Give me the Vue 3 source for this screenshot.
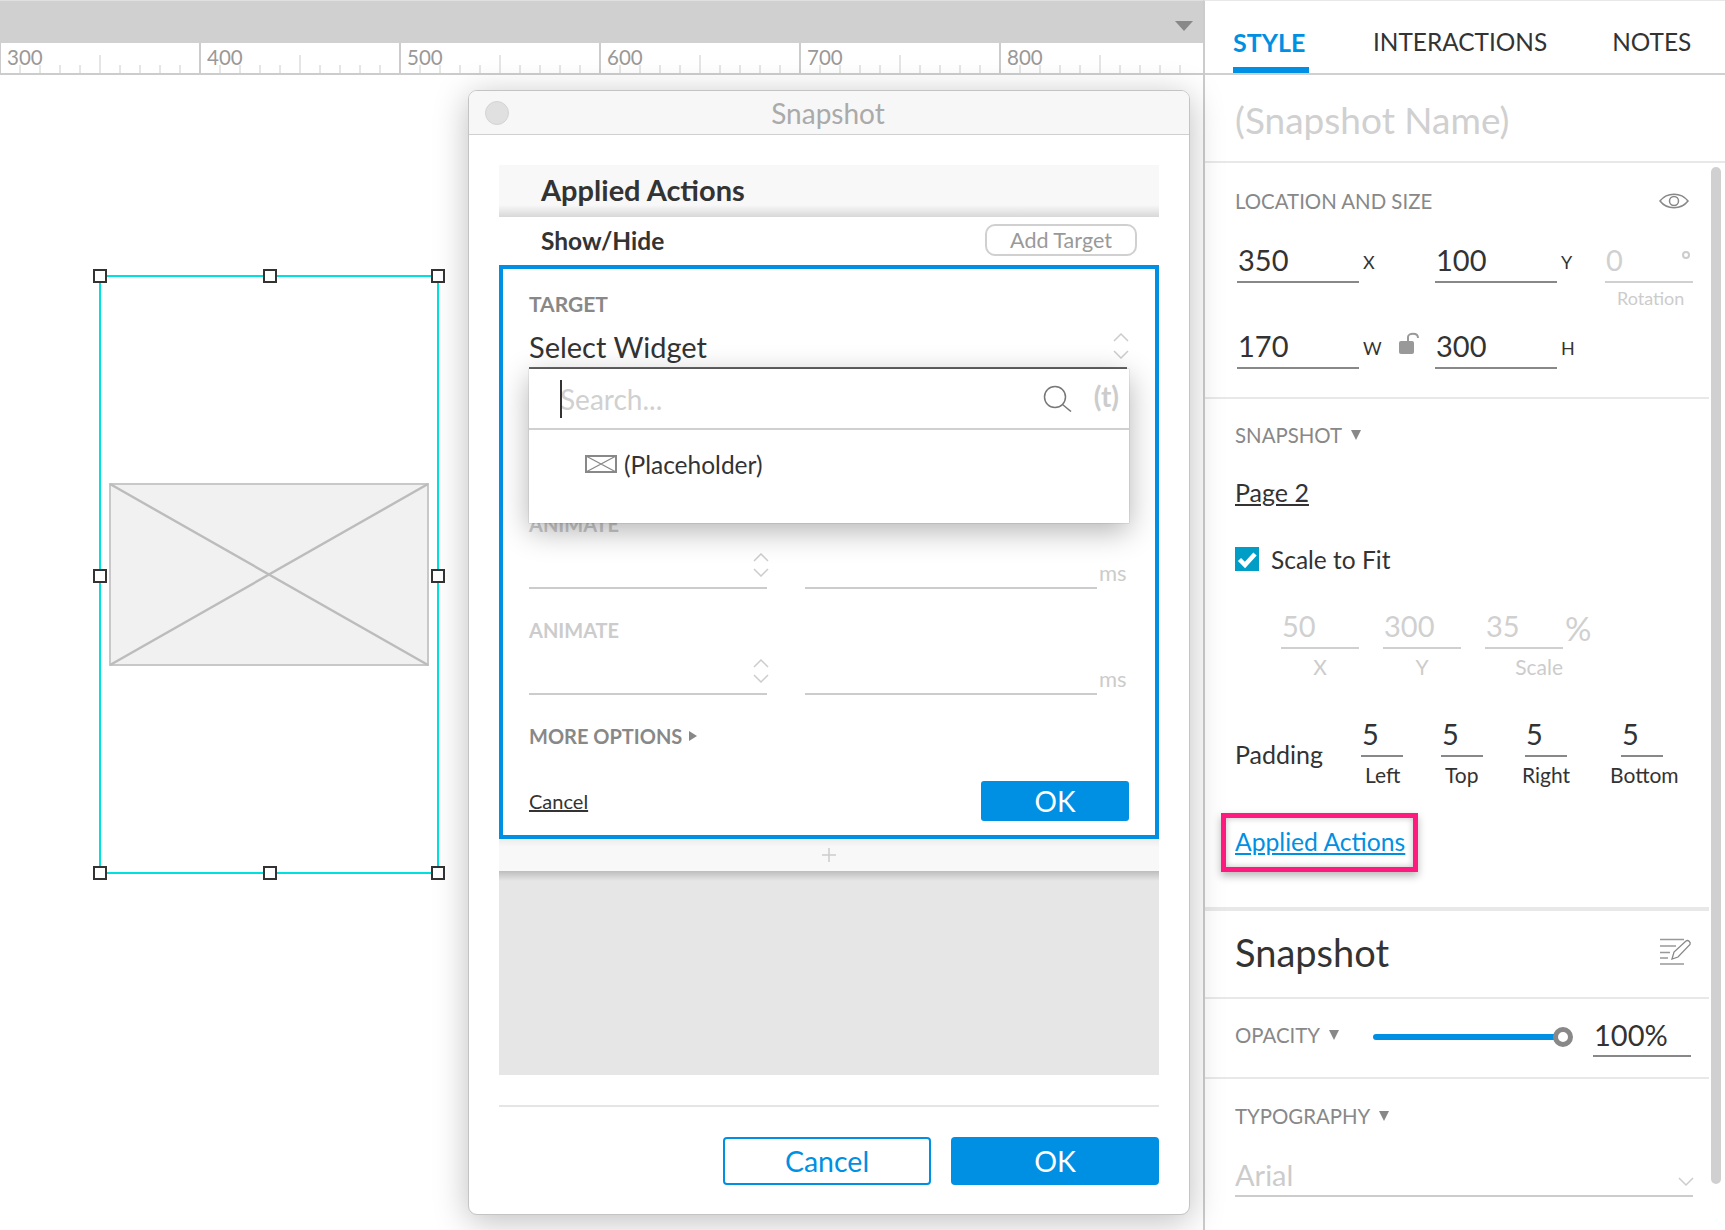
<script setup>
const segments = [300, 400, 500, 600, 700, 800]
const ticks = [20, 40, 60, 80, 100, 120, 140, 160, 180]
const handles = []
for (const y of [0, 50.2, 100]) {
  for (const x of [0, 50.3, 100]) {
    if (x === 50.3 && y === 50.2) continue
    handles.push({ x, y })
  }
}
const paddings = [
  { label: 'Left', cls: 'p-left' },
  { label: 'Top', cls: 'p-top' },
  { label: 'Right', cls: 'p-right' },
  { label: 'Bottom', cls: 'p-bottom' }
]
</script>

<template>
  <div class="app">
    <div class="workspace">
      <div class="toolbar"><span class="toolbar-caret"></span></div>
      <div class="ruler">
        <div v-for="s in segments" :key="s" class="segment">
          <span class="ruler-label">{{ s }}</span>
          <svg class="ruler-ticks" width="200" height="30" viewBox="0 0 200 30">
            <line
              v-for="t in ticks"
              :key="t"
              :x1="t"
              :x2="t"
              :y1="t === 100 ? 12 : 22"
              y2="30"
              stroke="#ccc"
              stroke-width="1"
            />
          </svg>
        </div>
      </div>
      <div class="canvas">
        <div class="selection">
          <svg class="placeholder" width="320" height="183" viewBox="0 0 320 183">
            <rect x="1" y="1" width="318" height="181" fill="#f1f1f1" stroke="#c8c8c8" stroke-width="2" />
            <path d="M1 1 L319 182 M319 1 L1 182" stroke="#bcbcbc" stroke-width="2.4" fill="none" />
          </svg>
          <div class="handles">
            <span
              v-for="(h, i) in handles"
              :key="i"
              class="handle"
              :style="{ left: h.x + '%', top: h.y + '%' }"
            ></span>
          </div>
        </div>
      </div>
    </div>

    <aside class="panel">
      <nav class="tabs">
        <span class="tab tab-active">STYLE</span>
        <span class="tab">INTERACTIONS</span>
        <span class="tab tab-notes">NOTES</span>
      </nav>
      <div class="name-row">(Snapshot Name)</div>
      <div class="panel-body">
        <div class="panel-content">
          <section class="sec sec-location">
            <div class="sec-title">
              <span class="caps">LOCATION AND SIZE</span>
              <svg class="eye" width="30" height="20" viewBox="0 0 30 20">
                <path d="M1 10 C8 1 22 1 29 10 C22 19 8 19 1 10 Z" fill="none" stroke="#888" stroke-width="1.5" />
                <circle cx="15" cy="10" r="4.5" fill="none" stroke="#888" stroke-width="1.5" />
              </svg>
            </div>
            <div class="loc-row loc-row-first">
              <div class="field wide">350</div>
              <span class="tag tag-a">X</span>
              <div class="field wide">100</div>
              <span class="tag tag-b">Y</span>
              <div class="rot">
                <div class="field rot-field"><span>0</span><span class="degree"></span></div>
                <div class="rot-label">Rotation</div>
              </div>
            </div>
            <div class="loc-row">
              <div class="field wide">170</div>
              <span class="tag tag-a">
                <span>W</span>
                <svg class="lock" width="21" height="23" viewBox="0 0 21 23">
                  <rect x="0" y="9" width="15" height="13" rx="2" fill="#999" />
                  <path d="M9 9 V5 C9 1 19 0 19 6" fill="none" stroke="#999" stroke-width="2" />
                </svg>
              </span>
              <div class="field wide">300</div>
              <span class="tag tag-b">H</span>
            </div>
          </section>

          <section class="sec sec-snapshot">
            <div class="caps caret-label">SNAPSHOT <i class="tri-down"></i></div>
            <a class="page-link">Page 2</a>
            <label class="check-row">
              <span class="checkbox">
                <svg width="24" height="24" viewBox="0 0 24 24">
                  <path d="M4.5 12.5 L10 18 L20 7" fill="none" stroke="#fff" stroke-width="4.5" />
                </svg>
              </span>
              <span>Scale to Fit</span>
            </label>
            <div class="fit-row">
              <div class="fit-col">
                <div class="field off">50</div>
                <div class="fit-label">X</div>
              </div>
              <div class="fit-col">
                <div class="field off">300</div>
                <div class="fit-label">Y</div>
              </div>
              <div class="fit-col">
                <div class="field off">35</div>
                <div class="fit-label scale">Scale</div>
              </div>
              <span class="percent">%</span>
            </div>
            <div class="padding-row">
              <span class="padding-title">Padding</span>
              <div v-for="p in paddings" :key="p.label" class="pad-col" :class="p.cls">
                <div class="field pad-field">5</div>
                <div class="pad-label">{{ p.label }}</div>
              </div>
            </div>
            <div class="highlight"><a class="applied-link">Applied Actions</a></div>
          </section>

          <section class="sec-heading">
            <h2>Snapshot</h2>
            <svg class="edit-icon" width="32" height="28" viewBox="0 0 32 28">
              <path d="M0 1.5 H24 M0 8 H16 M0 14.5 H10 M0 20 H8 M0 26 H24" stroke="#999" stroke-width="1.5" fill="none" />
              <path d="M12 21 L14 14 L26 3 C28 1.5 31 4 30 6.5 L18 19 Z" fill="#fff" stroke="#888" stroke-width="1.3" />
            </svg>
          </section>

          <section class="sec-opacity">
            <div class="caps caret-label opacity-label">OPACITY <i class="tri-down"></i></div>
            <div class="slider"><span class="knob"></span></div>
            <div class="field opacity-field">100%</div>
          </section>

          <section class="sec-type">
            <div class="caps caret-label">TYPOGRAPHY <i class="tri-down"></i></div>
            <div class="font-select">
              <span>Arial</span>
              <svg width="16" height="10" viewBox="0 0 16 10">
                <path d="M1 1 L8 8 L15 1" fill="none" stroke="#ccc" stroke-width="1.5" />
              </svg>
            </div>
          </section>
        </div>
        <div class="scrollbar"></div>
      </div>
    </aside>

    <div class="dialog">
      <header class="dialog-title">
        <span class="dot"></span>
        <span>Snapshot</span>
      </header>
      <div class="dialog-body">
        <div class="actions-head">Applied Actions</div>
        <div class="show-row">
          <span class="show-name">Show/Hide</span>
          <button class="add-target">Add Target</button>
        </div>
        <div class="editor">
          <div class="ed-label target">TARGET</div>
          <div class="select-row">
            <span>Select Widget</span>
            <svg class="updown" width="16" height="26" viewBox="0 0 16 26">
              <path d="M1 8 L8 1 L15 8 M1 18 L8 25 L15 18" fill="none" stroke="#ccc" stroke-width="1.5" />
            </svg>
          </div>

          <div class="ed-label muted first-animate">ANIMATE</div>
          <div class="timing">
            <div class="t-left">
              <svg class="updown-small" width="16" height="24" viewBox="0 0 16 24">
                <path d="M1 8 L8 1 L15 8 M1 16 L8 23 L15 16" fill="none" stroke="#ccc" stroke-width="1.5" />
              </svg>
            </div>
            <div class="t-right"></div>
            <span class="ms">ms</span>
          </div>
          <div class="ed-label muted next-animate">ANIMATE</div>
          <div class="timing">
            <div class="t-left">
              <svg class="updown-small" width="16" height="24" viewBox="0 0 16 24">
                <path d="M1 8 L8 1 L15 8 M1 16 L8 23 L15 16" fill="none" stroke="#ccc" stroke-width="1.5" />
              </svg>
            </div>
            <div class="t-right"></div>
            <span class="ms">ms</span>
          </div>
          <div class="ed-label more">MORE OPTIONS <i class="tri-right"></i></div>
          <div class="ed-footer">
            <a class="ed-cancel">Cancel</a>
            <button class="ed-ok">OK</button>
          </div>

          <div class="dropdown">
            <div class="search-row">
              <span class="search-text">Search...</span>
              <svg class="search-icon" width="29" height="27" viewBox="0 0 29 27">
                <circle cx="12" cy="12" r="10.5" fill="none" stroke="#777" stroke-width="1.5" />
                <path d="M19.5 19.5 L28 26.5" stroke="#777" stroke-width="1.5" />
              </svg>
              <span class="search-t">(t)</span>
            </div>
            <div class="result-row">
              <svg width="32" height="18" viewBox="0 0 32 18">
                <rect x="1" y="1" width="30" height="16" fill="#fff" stroke="#888" stroke-width="2" />
                <path d="M1 1 L31 17 M31 1 L1 17" stroke="#888" stroke-width="1.3" fill="none" />
              </svg>
              <span>(Placeholder)</span>
            </div>
          </div>
        </div>
        <div class="add-row">
          <svg width="14" height="14" viewBox="0 0 14 14">
            <path d="M7 0 V14 M0 7 H14" stroke="#ccc" stroke-width="1.5" />
          </svg>
        </div>
        <div class="gray-area"></div>
        <div class="dialog-rule"></div>
        <div class="dialog-foot">
          <button class="btn-cancel">Cancel</button>
          <button class="btn-ok">OK</button>
        </div>
      </div>
    </div>
  </div>
</template>

<style>
html, body { margin: 0; background: #fff; }
</style>

<style scoped>
.app {
  position: relative;
  display: flex;
  width: 1725px;
  height: 1230px;
  overflow: hidden;
  background: #fff;
  font-family: Lato, "Open Sans", sans-serif;
  color: #333;
}
button { font-family: inherit; cursor: pointer; padding: 0; }

/* Workspace */
.workspace { flex: 0 0 1203px; display: flex; flex-direction: column; }
.toolbar {
  position: relative;
  height: 43px;
  box-sizing: border-box;
  background: #d0d0d0;
  border-top: 1px solid #e0e0e0;
}
.toolbar-caret {
  position: absolute;
  right: 10px;
  top: 20px;
  border-left: 9px solid transparent;
  border-right: 9px solid transparent;
  border-top: 10px solid #888;
}
.ruler {
  display: flex;
  height: 32px;
  box-sizing: border-box;
  margin-left: -1px;
  border-bottom: 2px solid #ccc;
  overflow: hidden;
}
.segment {
  position: relative;
  flex: 0 0 200px;
  box-sizing: border-box;
  border-left: 2px solid #ccc;
}
.ruler-label {
  position: absolute;
  left: 6px;
  top: 2px;
  font-size: 20.5px;
  line-height: 24px;
  color: #999;
}
.ruler-ticks { position: absolute; left: -1px; top: 0; display: block; }
.canvas { position: relative; flex: 1; }
.selection {
  position: absolute;
  left: 99px;
  top: 200px;
  width: 340px;
  height: 599px;
  box-sizing: border-box;
  border: 2px solid #00e0e0;
  display: flex;
  align-items: center;
  justify-content: center;
}
.placeholder { filter: blur(0.5px); }
.handles { position: absolute; inset: -1px; }
.handle {
  position: absolute;
  width: 14px;
  height: 14px;
  box-sizing: border-box;
  border: 2px solid #333;
  background: #fff;
  transform: translate(-50%, -50%);
}

/* Panel */
.panel {
  flex: 1;
  display: flex;
  flex-direction: column;
  border-left: 2px solid #ccc;
  border-top: 1px solid #e8e8e8;
  box-sizing: border-box;
  min-width: 0;
}
.tabs {
  display: flex;
  gap: 64px;
  height: 74px;
  box-sizing: border-box;
  padding-left: 28px;
  border-bottom: 2px solid #d0d0d0;
}
.tab {
  box-sizing: border-box;
  height: 72px;
  padding-top: 24px;
  font-size: 24.4px;
  line-height: 34px;
  color: #333;
}
.tab-active {
  width: 76px;
  padding-left: 0;
  color: #0090e3;
  font-size: 25px;
  font-weight: 700;
  border-bottom: 6px solid #0090e3;
}
.tab-notes { margin-left: 1px; }
.name-row {
  height: 88px;
  box-sizing: border-box;
  padding: 24px 0 0 30px;
  border-bottom: 2px solid #e8e8e8;
  font-size: 37px;
  line-height: 42px;
  color: #d0d0d0;
}
.panel-body { display: flex; flex: 1; min-height: 0; }
.panel-content { flex: 0 0 504px; }
.scrollbar {
  flex: 0 0 10px;
  height: 1017px;
  margin: 4px 0 0 2px;
  border-radius: 5px;
  background: #d0d0d0;
}
.caps { font-size: 20.4px; line-height: 24px; color: #888; }
.sec { padding-left: 30px; padding-right: 16px; }
.sec-location { padding-top: 26px; padding-bottom: 28px; border-bottom: 2px solid #e8e8e8; }
.sec-title { display: flex; justify-content: space-between; align-items: center; height: 24px; }
.eye { margin-right: 4px; }
.loc-row { display: flex; align-items: flex-start; padding-left: 2px; }
.loc-row-first { margin-top: 26px; height: 86px; }
.field {
  height: 44px;
  box-sizing: border-box;
  border-bottom: 2px solid #888;
  font-size: 29px;
  line-height: 42px;
  color: #333;
}
.wide { width: 122px; padding-left: 1px; }
.tag {
  display: flex;
  align-items: flex-start;
  height: 44px;
  box-sizing: border-box;
  padding-left: 4px;
  font-size: 18px;
  line-height: 46px;
}
.tag-a { width: 76px; }
.tag-b { width: 48px; }
.lock { margin: 7px 0 0 17px; }
.rot { width: 88px; }
.rot-field {
  position: relative;
  padding-left: 1px;
  color: #d0d0d0;
  border-bottom-color: #d0d0d0;
}
.degree {
  position: absolute;
  right: 3px;
  top: 12px;
  width: 8px;
  height: 8px;
  box-sizing: border-box;
  border: 2px solid #ccc;
  border-radius: 50%;
}
.rot-label { margin-top: 4px; padding-left: 12px; font-size: 18px; line-height: 22px; color: #ccc; }

.sec-snapshot { padding-top: 24px; padding-bottom: 35px; border-bottom: 4px solid #e8e8e8; }
.caret-label { display: flex; align-items: center; gap: 9px; height: 24px; }
.tri-down {
  display: block;
  border-left: 5px solid transparent;
  border-right: 5px solid transparent;
  border-top: 10px solid #888;
}
.page-link {
  display: block;
  width: max-content;
  margin-top: 29px;
  font-size: 25px;
  line-height: 32px;
  color: #333;
  text-decoration: underline;
}
.check-row { display: flex; align-items: center; gap: 12px; height: 24px; margin-top: 39px; font-size: 24.5px; }
.checkbox { display: block; width: 24px; height: 24px; background: #009ec6; }
.checkbox svg { display: block; }
.fit-row { display: flex; margin-top: 34px; padding-left: 46px; }
.fit-col { width: 78px; margin-right: 24px; }
.field.off { color: #d0d0d0; border-bottom-color: #d0d0d0; padding-left: 1px; }
.fit-label { margin-top: 6px; height: 24px; line-height: 24px; color: #ccc; font-size: 21px; text-align: center; }
.fit-label.scale { text-align: right; }
.percent { margin: 3px 0 0 -22px; font-size: 33px; line-height: 40px; color: #d0d0d0; }
.padding-row { position: relative; display: flex; margin-top: 34px; }
.padding-title { width: 126px; height: 75px; font-size: 25px; line-height: 82px; color: #333; }
.pad-col { position: relative; width: 42px; }
.pad-field { padding-left: 1px; }
.pad-label { margin-top: 6px; width: max-content; font-size: 21px; line-height: 24px; color: #333; }
.p-top { margin-left: 38px; }
.p-right { margin-left: 42px; }
.p-bottom { margin-left: 54px; }
.p-left .pad-label { margin-left: 4px; }
.p-top .pad-label { margin-left: 4px; }
.p-right .pad-label { margin-left: -3px; }
.p-bottom .pad-label { margin-left: -11px; }
.highlight {
  width: 197px;
  height: 59px;
  box-sizing: border-box;
  margin: 25px 0 0 -14px;
  padding-left: 9px;
  border: 5px solid #ff1a80;
  box-shadow: 0 4px 8px rgba(0, 0, 0, 0.28), inset 0 0 6px rgba(0, 0, 0, 0.25);
  font-size: 24.7px;
  line-height: 47px;
  white-space: nowrap;
}
.applied-link { color: #0090e3; text-decoration: underline; }

.sec-heading {
  display: flex;
  justify-content: space-between;
  align-items: center;
  height: 88px;
  box-sizing: border-box;
  padding: 0 17px 4px 30px;
  border-bottom: 2px solid #e8e8e8;
}
.sec-heading h2 { margin: 0; font-size: 38px; font-weight: 400; line-height: 44px; color: #333; }
.sec-opacity {
  display: flex;
  align-items: flex-start;
  height: 80px;
  box-sizing: border-box;
  padding: 14px 0 0 30px;
  border-bottom: 2px solid #e8e8e8;
}
.opacity-label { width: 138px; margin-top: 10px; }
.slider {
  position: relative;
  width: 187px;
  height: 6px;
  margin-top: 21px;
  border-radius: 3px;
  background: #0090e3;
}
.knob {
  position: absolute;
  right: -13px;
  top: -7px;
  width: 20px;
  height: 20px;
  box-sizing: border-box;
  border: 5px solid #888;
  border-radius: 50%;
  background: #fff;
}
.opacity-field { width: 98px; margin-left: 33px; padding-left: 1px; line-height: 44px; }
.sec-type { padding: 25px 16px 0 30px; }
.font-select {
  display: flex;
  justify-content: space-between;
  align-items: flex-start;
  height: 47px;
  box-sizing: border-box;
  margin-top: 22px;
  border-bottom: 2px solid #ccc;
  font-size: 29px;
  line-height: 50px;
  color: #ccc;
}
.font-select svg { align-self: flex-end; margin: 0 -1px 8px 0; }

/* Dialog */
.dialog {
  position: absolute;
  left: 468px;
  top: 90px;
  width: 722px;
  box-sizing: border-box;
  border: 1px solid #c4c4c4;
  border-radius: 9px;
  background: #fff;
  box-shadow: 0 6px 34px rgba(0, 0, 0, 0.26);
}
.dialog-title {
  position: relative;
  display: flex;
  align-items: center;
  justify-content: center;
  height: 44px;
  box-sizing: border-box;
  padding-right: 2px;
  border-bottom: 1px solid #d0d0d0;
  border-radius: 8px 8px 0 0;
  background: #f7f7f7;
  font-size: 28px;
  color: #aaa;
}
.dot {
  position: absolute;
  left: 16px;
  top: 10px;
  width: 24px;
  height: 24px;
  box-sizing: border-box;
  border: 1px solid #d4d4d4;
  border-radius: 50%;
  background: #e0e0e0;
}
.dialog-body { padding: 30px 30px 29px; }
.actions-head {
  height: 52px;
  box-sizing: border-box;
  padding-left: 42px;
  font-size: 29px;
  font-weight: 700;
  line-height: 50px;
  color: #333;
  background: linear-gradient(#f8f8f8 0, #f8f8f8 40px, #d8d8d8 100%);
}
.show-row {
  display: flex;
  align-items: center;
  justify-content: space-between;
  height: 48px;
  padding: 0 22px 2px 42px;
  box-sizing: border-box;
}
.show-name { font-size: 24.5px; font-weight: 700; color: #333; }
.add-target {
  width: 152px;
  height: 32px;
  border: 2px solid #d0d0d0;
  border-radius: 10px;
  background: #fff;
  font-size: 21.5px;
  color: #999;
}
.editor {
  position: relative;
  box-sizing: border-box;
  height: 574px;
  padding: 23px 26px 0;
  border: 4px solid #0090e3;
}
.ed-label { font-size: 20px; font-weight: 700; line-height: 24px; color: #888; }
.target { font-size: 21px; }
.muted { color: #ccc; }
.select-row {
  display: flex;
  justify-content: space-between;
  align-items: flex-end;
  width: 598px;
  height: 53px;
  box-sizing: border-box;
  border-bottom: 2px solid #666;
  font-size: 29px;
  line-height: 36px;
  color: #333;
}
.select-row span { margin-bottom: 2px; }
.updown { margin: 0 -2px 8px 0; }
.first-animate { margin-top: 143px; }
.next-animate { margin-top: 29px; }
.timing { display: flex; align-items: flex-end; height: 53px; }
.t-left {
  position: relative;
  display: flex;
  justify-content: flex-end;
  align-items: flex-end;
  width: 238px;
  height: 53px;
  box-sizing: border-box;
  margin-right: 38px;
  border-bottom: 2px solid #ccc;
}
.updown-small { margin: 0 -2px 10px 0; }
.t-right { width: 292px; height: 53px; box-sizing: border-box; border-bottom: 2px solid #ccc; }
.ms { margin: 0 0 5px 2px; font-size: 22px; line-height: 22px; color: #ccc; }
.more { display: flex; align-items: center; gap: 7px; margin-top: 29px; }
.tri-right {
  display: block;
  border-top: 5px solid transparent;
  border-bottom: 5px solid transparent;
  border-left: 8px solid #888;
}
.ed-footer { display: flex; justify-content: space-between; align-items: center; height: 40px; margin-top: 33px; }
.ed-cancel { font-size: 20px; color: #333; text-decoration: underline; }
.ed-ok {
  width: 148px;
  height: 40px;
  border: 0;
  border-radius: 3px;
  background: #0090e3;
  font-size: 28px;
  color: #fff;
}
.dropdown {
  position: absolute;
  left: 26px;
  right: 26px;
  top: 100px;
  height: 154px;
  background: #fff;
  box-shadow: 0 8px 28px rgba(0, 0, 0, 0.3), 0 0 1px rgba(0, 0, 0, 0.4);
}
.search-row {
  display: flex;
  align-items: center;
  height: 61px;
  box-sizing: border-box;
  padding: 0 10px 0 31px;
  border-bottom: 2px solid #d0d0d0;
}
.search-text {
  flex: 1;
  position: relative;
  font-size: 28px;
  line-height: 38px;
  color: #d0d0d0;
}
.search-text::before {
  content: "";
  position: absolute;
  left: 0;
  top: 0;
  bottom: 0;
  width: 2px;
  background: #333;
}
.search-icon { margin: 0 22px 0 0; }
.search-t { margin-top: -6px; font-size: 28px; font-weight: 700; color: #ccc; }
.result-row {
  display: flex;
  align-items: center;
  gap: 7px;
  height: 68px;
  padding-left: 56px;
  font-size: 24.5px;
  color: #333;
}
.add-row {
  display: flex;
  align-items: center;
  justify-content: center;
  height: 32px;
  background: linear-gradient(#ececec 0, #f8f8f8 8px);
}
.add-row svg { display: block; }
.gray-area {
  height: 204px;
  background: linear-gradient(#bdbdbd 0, #e6e6e6 10px);
}
.dialog-rule { height: 2px; margin-top: 30px; background: #e5e5e5; }
.dialog-foot { display: flex; justify-content: flex-end; gap: 20px; margin-top: 30px; }
.btn-cancel, .btn-ok {
  width: 208px;
  height: 48px;
  border-radius: 4px;
  font-size: 28.5px;
}
.btn-cancel { border: 2px solid #0090e3; background: #fff; color: #0090e3; }
.btn-ok { border: 0; background: #0090e3; color: #fff; }
</style>
